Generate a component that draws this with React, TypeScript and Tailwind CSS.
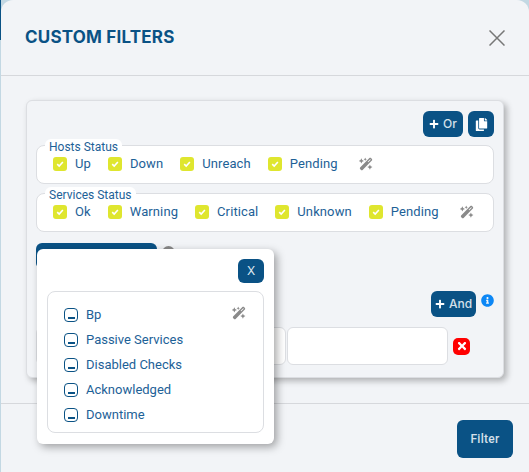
import { FaCopy, FaInfoCircle, FaPlus, FaTimes } from 'react-icons/fa';
import { FaWandMagicSparkles } from 'react-icons/fa6';

const hosts = ['Up', 'Down', 'Unreach', 'Pending'];
const services = ['Ok', 'Warning', 'Critical', 'Unknown', 'Pending'];
const extras = ['Bp', 'Passive Services', 'Disabled Checks', 'Acknowledged', 'Downtime'];

function Checked({ label }: { label: string }) {
  return (
    <label className="flex items-center">
      <span className="flex h-[14px] w-[14px] items-center justify-center rounded-[3px] bg-[#dfe62f]">
        <svg width="8" height="8" viewBox="0 0 10 10" fill="none" stroke="#fff" strokeWidth="2">
          <path d="M1.5 5.2 4 7.6 8.6 2.6" />
        </svg>
      </span>
      <span className="ml-2 pt-px text-[13px] leading-[14px] tracking-[0.1px] text-[#1d6197]">{label}</span>
    </label>
  );
}

function Unset({ label }: { label: string }) {
  return (
    <label className="flex items-center">
      <span className="flex h-[14px] w-[14px] items-end justify-center rounded-[4px] border border-[#0a5285] pb-[2px]">
        <span className="h-[1.5px] w-[7px] bg-[#0a5285]" />
      </span>
      <span className="ml-2 text-[13px] leading-[14px] text-[#1d6197]">{label}</span>
    </label>
  );
}

function StatusGroup({ title, items, className }: { title: string; items: string[]; className: string }) {
  return (
    <div className={`h-[39px] rounded-lg border border-[#dcdee2] bg-white ${className}`}>
      <div className="-mt-[7px] ml-2 h-[14px] w-fit rounded-t-md bg-white px-1 text-[12px] leading-[16px] text-[#1d6197]">
        {title}
      </div>
      <div className="ml-4 mt-[3px] flex items-center gap-[17px]">
        {items.map((item) => (
          <Checked key={item} label={item} />
        ))}
        <FaWandMagicSparkles className="ml-[4px] text-[14px] text-[#8a8a8a]" />
      </div>
    </div>
  );
}

export default function App() {
  return (
    <div className="relative h-screen w-full overflow-hidden bg-[#c3d8e3] pl-px font-['Roboto',sans-serif]">
      <div className="absolute left-0 top-0 h-[40px] w-px bg-[#0a5285]" />
      <div className="flex h-full flex-col rounded-t-[12px] bg-[#f2f4f7]">
        <header className="flex h-[76px] shrink-0 items-center justify-between border-b border-[#d6d8dc] pl-6 pr-6">
          <h1 className="font-['Inter',sans-serif] text-[17px] font-bold tracking-[0.2px] text-[#0a5285]">CUSTOM FILTERS</h1>
          <svg width="16" height="16" viewBox="0 0 16 16" stroke="#777" strokeWidth="1.5" fill="none">
            <path d="M0.5 0.5 15.5 15.5M15.5 0.5 0.5 15.5" />
          </svg>
        </header>

        <div className="flex-1 px-[25px] pt-6">
          <div className="relative h-[278px] rounded-md border border-[#dcdee2] bg-[#f2f4f7] px-[9px] pt-[10px] shadow-[3px_3px_6px_rgba(0,0,0,0.28)]">
            <div className="flex justify-end gap-[5px]">
              <button className="flex h-[26px] w-[40px] items-center justify-center gap-1 rounded-md bg-[#0a5285] font-['Inter',sans-serif] text-[12px] font-medium text-[#d5e0ea]">
                <FaPlus className="text-[10px] text-white" />
                Or
              </button>
              <button className="flex h-[26px] w-[26px] items-center justify-center rounded-md bg-[#0a5285]">
                <FaCopy className="text-[13px] text-white" />
              </button>
            </div>

            <StatusGroup title="Hosts Status" items={hosts} className="mt-2" />
            <StatusGroup title="Services Status" items={services} className="mt-[9px]" />

            <div className="mt-[11px] flex items-start gap-1">
              <div className="h-[26px] w-[121px] rounded-md bg-[#0a5285]" />
              <div className="mt-[3px] ml-[1px] h-[13px] w-[13px] rounded-full bg-[#8a8a8a]" />
            </div>

            <div className="mt-[22px] flex items-start justify-end gap-[5px]">
              <button className="flex h-[26px] w-[45px] items-center justify-center gap-1 rounded-md bg-[#0a5285] font-['Inter',sans-serif] text-[12px] font-medium text-[#d5e0ea]">
                <FaPlus className="text-[10px] text-white" />
                And
              </button>
              <FaInfoCircle className="mt-[3px] text-[13px] text-[#0d87f5]" />
            </div>

            <div className="mt-[10px] flex items-center">
              <div className="h-[38px] flex-1 rounded-md border border-[#dcdee2] bg-white" />
              <div className="ml-px h-[38px] w-[161px] rounded-md border border-[#dcdee2] bg-white" />
              <button className="ml-[5px] mr-[24px] flex h-[17px] w-[17px] items-center justify-center rounded-[5px] bg-[#ff0000]">
                <FaTimes className="text-[12px] text-white" />
              </button>
            </div>

            <div className="absolute left-[10px] top-[148px] h-[195px] w-[237px] rounded-md bg-white px-[10px] pt-[10px] shadow-[3px_3px_8px_rgba(0,0,0,0.35)]">
              <div className="flex -mr-[1px] justify-end pr-px">
                <button className="flex h-[24px] w-[26px] items-center justify-center rounded-md bg-[#0a5285] font-['Inter',sans-serif] text-[12px] text-[#dfe8f0]">
                  X
                </button>
              </div>
              <div className="mt-[8px] h-[142px] w-[217px] rounded-lg border border-[#dcdee2] px-4 pt-[10px]">
                {extras.map((item, i) => (
                  <div key={item} className="flex h-[25px] items-center justify-between">
                    <Unset label={item} />
                    {i === 0 && <FaWandMagicSparkles className="mb-[4px] mr-[1px] text-[14px] text-[#8a8a8a]" />}
                  </div>
                ))}
              </div>
            </div>
          </div>
        </div>

        <footer className="flex h-[69px] shrink-0 items-start justify-end border-t border-[#d6d8dc] pr-4 pt-4">
          <button className="h-[38px] w-[56px] rounded-md bg-[#0a5285] text-[12px] font-medium tracking-[0.3px] text-[#d5e0ea]">
            Filter
          </button>
        </footer>
      </div>
    </div>
  );
}
